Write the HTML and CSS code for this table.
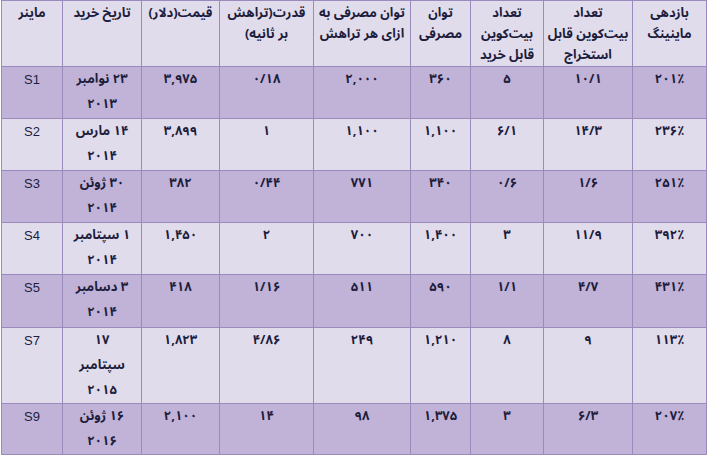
FILE: index.html
```html
<!DOCTYPE html>
<html lang="fa">
<head>
<meta charset="utf-8">
<link rel="stylesheet" href="styles.css">
</head>
<body>
<table class="miners">
  <colgroup>
    <col class="c1"><col class="c2"><col class="c3"><col class="c4"><col class="c5"><col class="c6"><col class="c7"><col class="c8"><col class="c9">
  </colgroup>
  <thead>
    <tr class="head">
      <th>ماینر</th>
      <th>تاریخ خرید</th>
      <th>قیمت(دلار)</th>
      <th>قدرت(تراهش<br>بر ثانیه)</th>
      <th>توان مصرفی به<br>ازای هر تراهش</th>
      <th>توان<br>مصرفی</th>
      <th>تعداد<br>بیت‌کوین<br>قابل خرید</th>
      <th>تعداد<br>بیت‌کوین قابل<br>استخراج</th>
      <th>بازدهی<br>ماینینگ</th>
    </tr>
  </thead>
  <tbody>
    <tr class="odd r1">
      <td class="lat">S1</td><td>۲۳ نوامبر<br>۲۰۱۳</td><td>۳,۹۷۵</td><td>۰/۱۸</td><td>۲,۰۰۰</td><td>۳۶۰</td><td>۵</td><td>۱۰/۱</td><td>۲۰۱٪</td>
    </tr>
    <tr class="even r2">
      <td class="lat">S2</td><td>۱۴ مارس<br>۲۰۱۴</td><td>۳,۸۹۹</td><td>۱</td><td>۱,۱۰۰</td><td>۱,۱۰۰</td><td>۶/۱</td><td>۱۴/۳</td><td>۲۳۶٪</td>
    </tr>
    <tr class="odd r3">
      <td class="lat">S3</td><td>۳۰ ژوئن<br>۲۰۱۴</td><td>۳۸۲</td><td>۰/۴۴</td><td>۷۷۱</td><td>۳۴۰</td><td>۰/۶</td><td>۱/۶</td><td>۲۵۱٪</td>
    </tr>
    <tr class="even r4">
      <td class="lat">S4</td><td>۱ سپتامبر<br>۲۰۱۴</td><td>۱,۴۵۰</td><td>۲</td><td>۷۰۰</td><td>۱,۴۰۰</td><td>۳</td><td>۱۱/۹</td><td>۳۹۲٪</td>
    </tr>
    <tr class="odd r5">
      <td class="lat">S5</td><td>۳ دسامبر<br>۲۰۱۴</td><td>۴۱۸</td><td>۱/۱۶</td><td>۵۱۱</td><td>۵۹۰</td><td>۱/۱</td><td>۴/۷</td><td>۴۳۱٪</td>
    </tr>
    <tr class="even r7">
      <td class="lat">S7</td><td>۱۷<br>سپتامبر<br>۲۰۱۵</td><td>۱,۸۲۳</td><td>۴/۸۶</td><td>۲۴۹</td><td>۱,۲۱۰</td><td>۸</td><td>۹</td><td>۱۱۳٪</td>
    </tr>
    <tr class="odd r9">
      <td class="lat">S9</td><td>۱۶ ژوئن<br>۲۰۱۶</td><td>۲,۱۰۰</td><td>۱۴</td><td>۹۸</td><td>۱,۳۷۵</td><td>۳</td><td>۶/۳</td><td>۲۰۷٪</td>
    </tr>
  </tbody>
</table>
</body>
</html>
```
FILE: styles.css
```css
html, body {
  margin: 0;
  padding: 0;
  background: #ffffff;
}
body {
  padding: 0 0 0 1px;
}
.miners {
  border-collapse: collapse;
  table-layout: fixed;
  width: 705px;
  font-family: "Noto Sans Arabic", "Noto Naskh Arabic", "DejaVu Sans", "Liberation Sans", sans-serif;
  font-size: 13px;
  font-weight: bold;
  color: #1d1d3c;
}
.c1 { width: 61px; }
.c2 { width: 79px; }
.c3 { width: 78px; }
.c4 { width: 94px; }
.c5 { width: 97px; }
.c6 { width: 60px; }
.c7 { width: 73px; }
.c8 { width: 89px; }
.c9 { width: 74px; }
.miners th, .miners td {
  border: 1px solid #9b8bbd;
  text-align: center;
  vertical-align: top;
  direction: rtl;
  white-space: nowrap;
  padding: 0;
}
.miners th {
  line-height: 21px;
  padding-top: 2px;
  font-weight: bold;
}
.miners td {
  line-height: 25px;
  padding-top: 0;
}
.head { height: 64px; background: #e1dcec; }
.odd { background: #c0b3d7; }
.even { background: #e1dcec; }
.r1 { height: 52px; }
.r2, .r3, .r4 { height: 52px; }
.r5 { height: 53px; }
.r7 { height: 75px; }
.r9 { height: 51px; }
.miners td.lat {
  font-family: "Liberation Sans", Arial, sans-serif;
  font-size: 13px;
  font-weight: normal;
  direction: ltr;
}
```
